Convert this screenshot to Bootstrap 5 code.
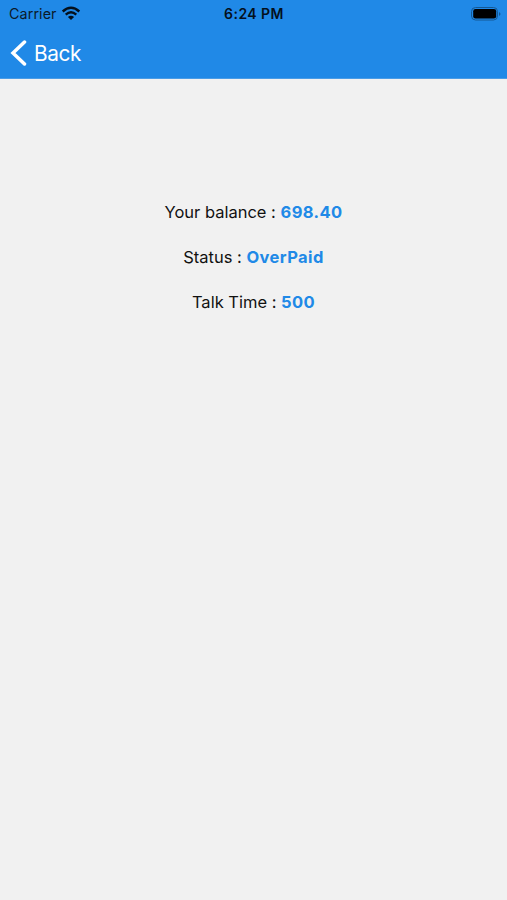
<!DOCTYPE html>
<html lang="en">
<head>
<meta charset="utf-8">
<meta name="viewport" content="width=device-width, initial-scale=1">
<title>Balance</title>
<link href="https://cdn.jsdelivr.net/npm/bootstrap@5.3.0/dist/css/bootstrap.min.css" rel="stylesheet">
<style>
body{font-family:Inter,"Liberation Sans",sans-serif;background:#f1f1f1;color:#111;min-height:100vh}
.app-header{background:#2089e7;height:79px;border-bottom:1px solid #4a9ce6}
.status-bar{height:27px;font-size:14.3px;line-height:27px;color:#0b1a29;padding:0 6px 0 9px}
.status-bar .carrier{letter-spacing:.1px}
.status-bar .clock{font-size:14px;font-weight:600;letter-spacing:.45px;color:#04101c;margin-left:-2px}
.back-row{height:52px;padding-left:10px;gap:7px;color:#fff;font-size:20.8px;letter-spacing:-.35px;text-decoration:none}
.back-row span{padding-top:1px}
.details{padding-top:121px;font-size:16.5px;line-height:25px;gap:20px}
.details strong{color:#2089e7;font-weight:700;font-size:16.5px;letter-spacing:.4px}
</style>
</head>
<body>
<header class="app-header">
<div class="status-bar row g-0">
<div class="col d-flex align-items-center gap-1"><span class="carrier">Carrier</span>
<svg width="20" height="15" viewBox="0 0 20 15" fill="none" stroke="#04101c" stroke-width="2.4"><path d="M1.700 5.500Q10 -2 18.300 5.500M4.700 8.600Q10 4 15.300 8.600"/><path d="M10 14L6.900 10.900Q10 8.500 13.100 10.900Z" fill="#04101c" stroke="none"/></svg></div>
<div class="col-auto clock">6:24 PM</div>
<div class="col d-flex align-items-center justify-content-end">
<svg width="30" height="14" viewBox="0 0 30 14"><rect x=".5" y=".5" width="26" height="12.500" rx="4" fill="none" stroke="#145894"/><rect x="2.200" y="2" width="23" height="9.500" rx="2.300"/><path d="M28 5Q31 7 28 9Z" fill="#145894"/></svg></div>
</div>
<a href="#" class="back-row d-flex align-items-center"><svg width="17" height="26" viewBox="0 0 17 26" fill="none" stroke="#fff" stroke-width="3.500" stroke-linecap="round"><path d="M14.500 2L3 13L14.500 24"/></svg><span>Back</span></a>
</header>
<main class="details d-flex flex-column align-items-center">
<p class="mb-0">Your balance : <strong>698.40</strong></p>
<p class="mb-0">Status : <strong>OverPaid</strong></p>
<p class="mb-0">Talk Time : <strong>500</strong></p>
</main>
<script src="https://cdn.jsdelivr.net/npm/bootstrap@5.3.0/dist/js/bootstrap.bundle.min.js"></script>
</body>
</html>
